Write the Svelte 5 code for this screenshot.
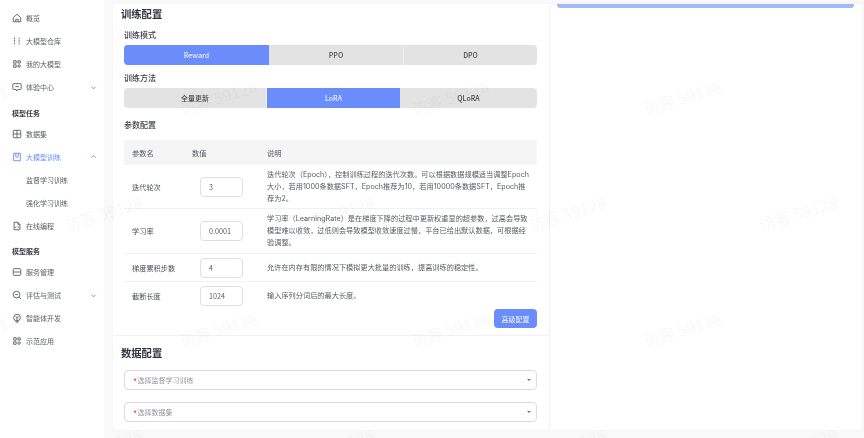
<script lang="ts">
  const icons: Record<string, string> = {
    home: 'M1.5 5.5 6 1.5l4.5 4v5h-9zM4.5 10.5V7.5h3v3',
    repo: 'M3 2v2M3 5v2M3 8v2M8.5 2v2M8.5 5v2M8.5 8v2',
    apps: 'M2 2h3v3H2zM7 2.2h3v2.6H7zM2 7h3v3H2zM8.5 7a1.5 1.5 0 1 1 0 3 1.5 1.5 0 0 1 0-3z',
    chat: 'M2 2h8a1 1 0 0 1 1 1v5a1 1 0 0 1-1 1H7L5.5 10.8 5 9H2a1 1 0 0 1-1-1V3a1 1 0 0 1 1-1zM4 5.5h4',
    grid: 'M2.5 1.5h7a1 1 0 0 1 1 1v7a1 1 0 0 1-1 1h-7a1 1 0 0 1-1-1v-7a1 1 0 0 1 1-1zM6 1.5v9M1.5 6h9',
    train: 'M2 1.5h8v9H2zM4.5 1.5v4l1.5 1 1.5-1v-4',
    code: 'M2.5 1.5h4.5l2.5 2.5v6.5h-7zM7 1.5V4h2.5M5 6.5 4 7.5l1 1M7 6.5l1 1-1 1',
    server: 'M2.5 2h7a1 1 0 0 1 1 1v6a1 1 0 0 1-1 1h-7a1 1 0 0 1-1-1V3a1 1 0 0 1 1-1zM1.5 6h9',
    search: 'M5.5 1.5a4 4 0 1 1 0 8 4 4 0 0 1 0-8zM8.5 8.5l2.5 2.5M3.8 5.5h3.4',
    agent: 'M6 1.5a4 4 0 1 1 0 8 4 4 0 0 1 0-8zM6 5.5v5M4 10.8h4M4.2 4.2 6 5.5l1.8-1.3'
  }

  const groups = [
    {
      items: [
        { label: '概览', icon: 'home' },
        { label: '大模型仓库', icon: 'repo' },
        { label: '我的大模型', icon: 'apps' },
        { label: '体验中心', icon: 'chat', arrow: 'down' }
      ]
    },
    {
      title: '模型任务',
      items: [
        { label: '数据集', icon: 'grid' },
        { label: '大模型训练', icon: 'train', arrow: 'up', active: true },
        { label: '监督学习训练' },
        { label: '强化学习训练' },
        { label: '在线编程', icon: 'code' }
      ]
    },
    {
      title: '模型服务',
      items: [
        { label: '服务管理', icon: 'server' },
        { label: '评估与测试', icon: 'search', arrow: 'down' },
        { label: '智能体开发', icon: 'agent' },
        { label: '示范应用', icon: 'apps' }
      ]
    }
  ]

  const modes = [
    { label: 'Reward', width: 145, active: true },
    { label: 'PPO', width: 135 },
    { label: 'DPO', width: 133 }
  ]
  const methods = [
    { label: '全量更新', width: 143 },
    { label: 'LoRA', width: 133, active: true },
    { label: 'QLoRA', width: 137 }
  ]

  // line breaks kept as in the design
  const params = [
    { name: '迭代轮次', value: '3', height: 44, desc: '迭代轮次（Epoch），控制训练过程的迭代次数。可以根据数据规模适当调整Epoch\n大小，若用1000条数据SFT，Epoch推荐为10，若用10000条数据SFT，Epoch推\n荐为2。' },
    { name: '学习率', value: '0.0001', height: 45, desc: '学习率（LearningRate）是在梯度下降的过程中更新权重显的超参数，过高会导致\n模型难以收敛，过低则会导致模型收敛速度过慢，平台已给出默认数据，可根据经\n验调整。' },
    { name: '梯度累积步数', value: '4', height: 28, desc: '允许在内存有限的情况下模拟更大批量的训练，提高训练的稳定性。' },
    { name: '截断长度', value: '1024', height: 27, desc: '输入序列分词后的最大长度。' }
  ]

  const selects = ['选择监督学习训练', '选择数据集']

  const marks = [
    [-14, 97], [218, 97], [450, 97], [682, 97],
    [103, 213], [335, 213], [567, 213], [798, 213],
    [-14, 329], [218, 329], [450, 329], [682, 329],
    [103, 445], [335, 445], [567, 445], [798, 445]
  ]
</script>

<div class="page">
  <aside class="sidebar">
    {#each groups as group}
      {#if group.title}
        <div class="nav-title">{group.title}</div>
      {/if}
      {#each group.items as item}
        <div class="nav-item" class:active={item.active} class:sub={!item.icon}>
          {#if item.icon}
            <svg class="nav-icon" viewBox="0 0 12 12"><path d={icons[item.icon]} /></svg>
          {/if}
          <span class="nav-label">{item.label}</span>
          {#if item.arrow}
            <svg class="nav-arrow" viewBox="0 0 8 8"><path d={item.arrow === 'up' ? 'M1.5 5.5 4 3l2.5 2.5' : 'M1.5 3 4 5.5 6.5 3'} /></svg>
          {/if}
        </div>
      {/each}
    {/each}
  </aside>

  <main class="main">
    <section class="card left">
      <div class="config">
        <h2>训练配置</h2>
        <h3>训练模式</h3>
        <div class="segments">
          {#each modes as m}
            <div class="segment" class:on={m.active} style="width: {m.width}px">{m.label}</div>
          {/each}
        </div>
        <h3 class="method-title">训练方法</h3>
        <div class="segments">
          {#each methods as m}
            <div class="segment" class:on={m.active} style="width: {m.width}px">{m.label}</div>
          {/each}
        </div>
        <h3 class="param-title">参数配置</h3>
        <div class="table">
          <div class="row head">
            <span>参数名</span>
            <span>数值</span>
            <span>说明</span>
          </div>
          {#each params as p}
            <div class="row" style="height: {p.height}px">
              <span>{p.name}</span>
              <span class="input-cell"><span class="input">{p.value}</span></span>
              <span class="desc">{p.desc}</span>
            </div>
          {/each}
        </div>
        <div class="actions"><button class="advanced">高级配置</button></div>
      </div>

      <div class="data">
        <h2>数据配置</h2>
        {#each selects as s}
          <div class="select">
            <span class="req">*</span><span class="placeholder">{s}</span>
            <span class="caret"></span>
          </div>
        {/each}
      </div>
    </section>

    <section class="card right">
      <div class="progress"></div>
    </section>
  </main>

  <div class="marks">
    {#each marks as [x, y]}
      <span class="mark" style="left: {x}px; top: {y}px">访客 59128</span>
    {/each}
  </div>
</div>

<style>
  :global(body) {
    margin: 0;
    background: #fff;
  }

  .page {
    position: relative;
    display: flex;
    width: 864px;
    height: 438px;
    overflow: hidden;
    font-family: "Noto Sans CJK SC", "Noto Sans", sans-serif;
    color: #4a4f57;
    filter: blur(0.3px);
  }

  .sidebar {
    width: 104px;
    flex: none;
    box-sizing: border-box;
    padding-top: 7px;
    background: #fff;
  }

  .nav-title {
    height: 15px;
    margin: 7px 0 2px;
    padding-left: 12px;
    font-size: 7px;
    line-height: 15px;
    font-weight: 700;
    color: #3a3f47;
  }

  .nav-item {
    display: flex;
    align-items: center;
    height: 22.9px;
    padding: 0 7px 0 12px;
    font-size: 7px;
    color: #5a6068;
  }

  .nav-item.active {
    color: #6b8dfb;
  }

  .nav-item.sub {
    padding-left: 26px;
  }

  .nav-icon {
    width: 10px;
    height: 10px;
    margin-right: 4px;
    fill: none;
    stroke: currentColor;
    stroke-width: 1.1;
  }

  .nav-label {
    flex: 1;
  }

  .nav-arrow {
    width: 7px;
    height: 7px;
    fill: none;
    stroke: #858a92;
    stroke-width: 1;
  }

  .active .nav-arrow {
    stroke: #6b8dfb;
  }

  .main {
    flex: 1;
    display: flex;
    box-sizing: border-box;
    padding: 4px 2px 8px 9px;
    background: #f9f9fa;
  }

  .card {
    background: #fff;
    border-radius: 0 0 4px 4px;
    box-shadow: 0 0 3px rgba(0, 0, 0, 0.05);
  }

  .left {
    width: 436px;
    flex: none;
    margin-right: 1px;
    display: flex;
    flex-direction: column;
  }

  .right {
    flex: 1;
    padding: 0 8px 0 7px;
  }

  .progress {
    height: 4px;
    background: #a3b8fb;
    border-radius: 0 0 3px 3px;
  }

  .config {
    height: 332px;
    box-sizing: border-box;
    padding: 2px 12px 0 11px;
    border-bottom: 1px solid #f1f1f2;
  }

  h2 {
    margin: 0 0 0 -3px;
    height: 15px;
    font-size: 10.3px;
    line-height: 15px;
    font-weight: 700;
    color: #2f3540;
  }

  h3 {
    margin: 7px 0 0;
    height: 14px;
    font-size: 8px;
    line-height: 14px;
    font-weight: 500;
    color: #3a3f47;
  }

  .method-title {
    margin-top: 6px;
  }

  .param-title {
    margin-top: 10px;
  }

  .segments {
    display: flex;
    height: 20px;
    margin-top: 3px;
    border-radius: 4px;
    overflow: hidden;
    background: #e3e3e3;
  }

  .segment {
    box-sizing: border-box;
    font-size: 7px;
    line-height: 20px;
    text-align: center;
    font-weight: 500;
    color: #4a4a4a;
    border-right: 1px solid #efefef;
  }

  .segment:last-child {
    border-right: 0;
  }

  .segment.on {
    background: #6b8dfb;
    color: #e8eeff;
    border-right: 0;
  }

  .table {
    margin-top: 8px;
  }

  .row {
    display: grid;
    grid-template-columns: 60px 75px 1fr;
    align-items: center;
    box-sizing: border-box;
    padding-left: 8px;
    font-size: 7.2px;
    border-bottom: 1px solid #f1f1f2;
  }

  .row:last-child {
    border-bottom: 0;
  }

  .head {
    height: 25px;
    background: #f5f5f5;
    border-bottom: 0;
    color: #555a62;
  }

  .input-cell {
    padding-left: 8px;
  }

  .input {
    display: block;
    box-sizing: border-box;
    width: 43px;
    height: 20px;
    padding-left: 8px;
    font-size: 7.2px;
    line-height: 18px;
    color: #556070;
    border: 1px solid #dcdfe3;
    border-radius: 4px;
  }

  .desc {
    line-height: 12px;
    white-space: pre-line;
    font-family: "Inter", "Noto Sans CJK SC", sans-serif;
    color: #555a62;
  }

  .actions {
    display: flex;
    justify-content: flex-end;
  }

  .advanced {
    width: 43px;
    height: 19px;
    padding: 0;
    font-family: inherit;
    font-size: 7px;
    color: #f0f3ff;
    background: #6b8dfb;
    border: 0;
    border-radius: 4px;
  }

  .data {
    padding: 9px 12px 0 11px;
  }

  .select {
    display: flex;
    align-items: center;
    box-sizing: border-box;
    height: 20px;
    margin-top: 12px;
    padding: 0 5px 0 8px;
    font-size: 7px;
    border: 1px solid #dcdcdc;
    border-radius: 4px;
  }

  .data h2 + .select {
    margin-top: 10px;
  }

  .req {
    color: #f0565c;
    font-weight: 700;
    font-size: 8px;
    margin-right: 0.5px;
  }

  .placeholder {
    flex: 1;
    color: #94979d;
  }

  .caret {
    width: 0;
    height: 0;
    border-left: 2px solid transparent;
    border-right: 2px solid transparent;
    border-top: 2.5px solid #777;
  }

  .marks {
    position: absolute;
    inset: 0;
    pointer-events: none;
  }

  .mark {
    position: absolute;
    transform: translate(-50%, -50%) rotate(-17deg);
    font-size: 16px;
    white-space: nowrap;
    color: rgba(0, 0, 0, 0.03);
  }
</style>
